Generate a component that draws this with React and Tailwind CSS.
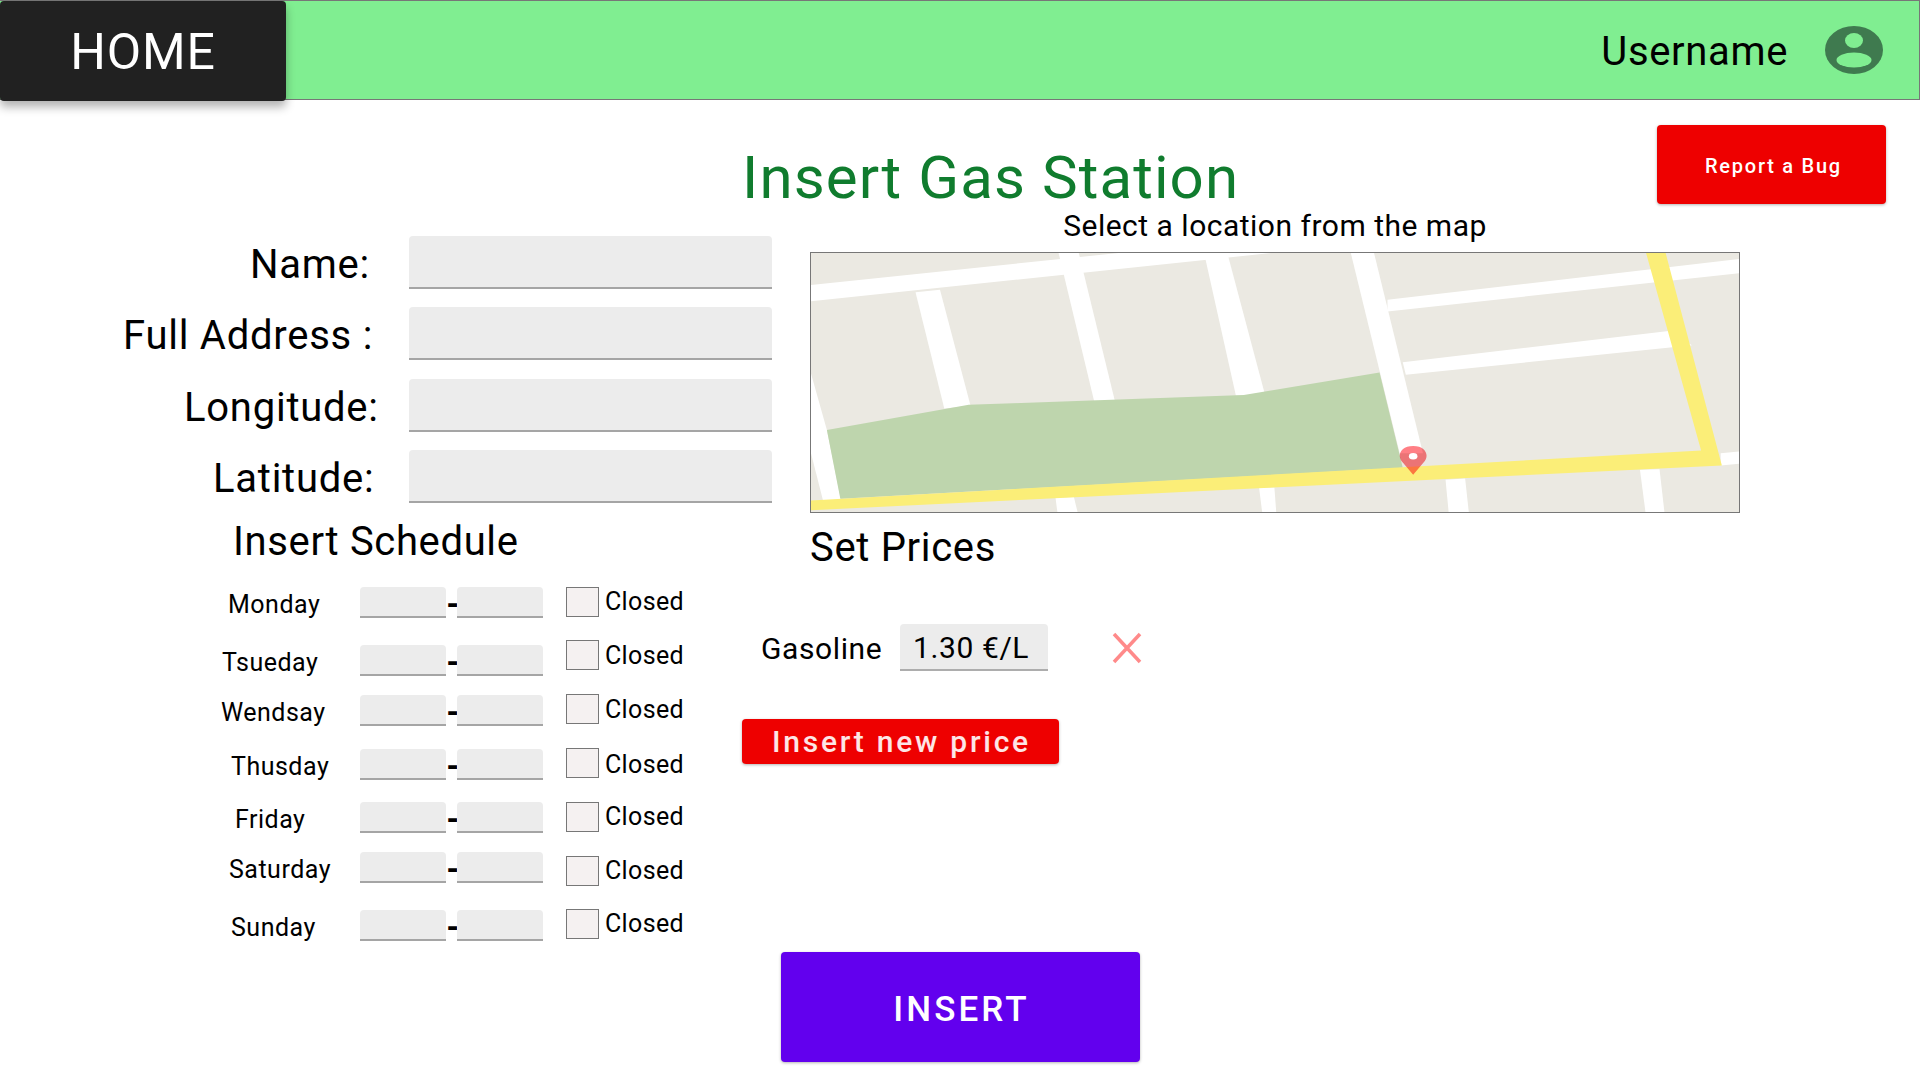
const fields = [
  { label: "Name:", cls: "pl-[250px]" },
  { label: "Full Address :", cls: "pl-[123px]" },
  { label: "Longitude:", cls: "pl-[184px]" },
  { label: "Latitude:", cls: "pl-[213px]" },
];

const days = [
  { d: "Monday", lc: "pl-[228px]", rc: "h-[58px]", cc: "mt-0", tc: "pt-0" },
  { d: "Tsueday", lc: "pl-[222px]", rc: "h-[50px]", cc: "-mt-[5px]", tc: "pt-[1px]" },
  { d: "Wendsay", lc: "pl-[221px]", rc: "h-[54px]", cc: "-mt-[1px]", tc: "pt-[1px]" },
  { d: "Thusday", lc: "pl-[231px]", rc: "h-[53px]", cc: "-mt-[3px]", tc: "pt-[4px]" },
  { d: "Friday", lc: "pl-[235px]", rc: "h-[50px]", cc: "mt-0", tc: "pt-0" },
  { d: "Saturday", lc: "pl-[229px]", rc: "h-[58px]", cc: "mt-[4px]", tc: "pt-0" },
  { d: "Sunday", lc: "pl-[231px]", rc: "h-[40px]", cc: "-mt-[1px]", tc: "pt-0" },
];

function Field({ className }) {
  return <div className={"bg-[#ececec] border-b-2 border-[#a5a5a5] rounded-t-[4px] " + className} />;
}

function MapView() {
  const white = [
    "17,133 425,55 520,37 770,37 17,182",
    "188,155 228,148 278,497 235,505",
    "422,37 455,37 514,482 480,482",
    "660,37 698,37 760,466 712,466",
    "900,37 938,37 1018,640 980,640",
    "960,178 1535,55 1535,98 960,213",
    "985,366 1420,272 1458,315 990,404",
    "17,400 43,570 66,780 37,785 17,640",
    "417,775 447,772 453,817 420,817",
    "750,745 775,743 778,817 755,817",
    "1055,720 1087,716 1093,817 1060,817",
    "1373,690 1405,688 1413,817 1382,817",
    "1505,640 1535,635 1535,672 1505,677",
  ];
  return (
    <div className="w-[930px] h-[261px] border border-[#777777] overflow-hidden bg-[#ebe9e2]">
      <svg viewBox="17 37 1518 780" preserveAspectRatio="none" className="block w-full h-full blur-[0.4px]">
        <rect x="17" y="37" width="1518" height="780" fill="#ebe9e2" />
        {white.map((p) => (
          <polygon key={p} points={p} fill="#ffffff" />
        ))}
        <polygon points="43,570 275,494 725,465 947,397 985,684 65,777" fill="#bed5ad" />
        <polygon points="17,782 1473,632 1383,37 1415,37 1507,677 17,812" fill="#fbee78" />
        <path
          d="M1002,705 L985,668 C975,650 980,618 1002,618 C1024,618 1029,650 1019,668 Z"
          fill="#ff7f85"
          className="mix-blend-multiply"
        />
        <ellipse cx="1002" cy="649" rx="7" ry="10" fill="#ffffff" />
      </svg>
    </div>
  );
}

export default function App() {
  return (
    <div className="w-[1920px] h-[1080px] overflow-hidden bg-white text-black font-[family-name:Roboto,sans-serif]">
      <header className="h-[100px] flex items-center justify-between bg-[#80ee91] border-y border-r border-[#777777]">
        <div className="w-[286px] h-[100px] -mb-px flex items-center justify-center bg-[#212121] rounded-[4px] text-white text-[50px] tracking-[0.8px] pt-[3px] shadow-[0_6px_10px_rgba(0,0,0,0.3)]">
          HOME
        </div>
        <div className="flex items-center">
          <span className="text-[40px] leading-[48px] tracking-[0.65px] pt-[3px]">Username</span>
          <svg width="58" height="48" viewBox="0 0 58 48" className="ml-[37px] mr-[36px]">
            <ellipse cx="29" cy="24" rx="29" ry="24" fill="#3f7a4f" />
            <ellipse cx="29" cy="14.5" rx="9" ry="7.5" fill="#80ee91" />
            <ellipse cx="29" cy="34" rx="17.5" ry="7.5" fill="#80ee91" />
          </svg>
        </div>
      </header>

      <div className="h-[110px] flex items-start">
        <h1 className="ml-[742px] mt-[43px] text-[60px] leading-[70px] text-[#107c2e] tracking-[1.1px] whitespace-nowrap">
          Insert Gas Station
        </h1>
        <button className="ml-auto mr-[34px] mt-[25px] w-[229px] h-[79px] pt-[3px] pl-[4px] rounded-[4px] bg-[#ee0000] text-white text-[20px] font-medium tracking-[1.75px] shadow-[0_1px_3px_rgba(0,0,0,0.3)]">
          Report a Bug
        </button>
      </div>

      <div className="flex">
        <div className="w-[810px] shrink-0 pt-[26px]">
          <div className="flex flex-col gap-[18.33px]">
            {fields.map((f) => (
              <div key={f.label} className="flex items-center h-[53px]">
                <label className={"w-[409px] text-[40px] leading-[48px] pt-[5px] tracking-[0.75px] whitespace-nowrap " + f.cls}>{f.label}</label>
                <Field className="w-[363px] h-[53px]" />
              </div>
            ))}
          </div>
          <h2 className="h-[84px] pl-[233px] pt-[15px] text-[40px] leading-[48px] tracking-[0.65px] whitespace-nowrap">Insert Schedule</h2>
          <div>
            {days.map((r) => (
              <div key={r.d} className={"flex items-start " + r.rc}>
                <div className="flex items-center h-[31px]">
                  <span className={"w-[360px] text-[25px] leading-[30px] pt-[6px] tracking-[0.5px] " + r.lc}>{r.d}</span>
                  <Field className="w-[86px] h-[31px]" />
                  <span className="w-[11px] text-center text-[30px] font-black leading-[30px] pt-[4px]">-</span>
                  <Field className="w-[86px] h-[31px]" />
                </div>
                <div className={"flex items-center ml-[23px] " + r.cc}>
                  <div className="w-[33px] h-[30px] bg-[#f5f1f1] border border-[#777777]" />
                  <span className={"ml-[6px] text-[25px] leading-[30px] tracking-[0.35px] " + r.tc}>Closed</span>
                </div>
              </div>
            ))}
          </div>
        </div>

        <div className="w-[930px] shrink-0">
          <p className="text-center text-[30px] leading-[32px] tracking-[0.5px] whitespace-nowrap">Select a location from the map</p>
          <div className="mt-[10px]">
            <MapView />
          </div>
          <h2 className="mt-[11px] -mb-[1px] text-[40px] leading-[48px] tracking-[0.67px]">Set Prices</h2>
          <div className="mt-[53px] -ml-[49px] flex items-center h-[47px]">
            <span className="w-[139px] pt-[2px] text-[30px] leading-[36px] tracking-[0.6px]">Gasoline</span>
            <div className="w-[148px] h-[47px] pl-[13px] pt-[2px] flex items-center bg-[#ececec] border-b-2 border-[#adadad] rounded-t-[4px] text-[30px] leading-[36px] whitespace-nowrap tracking-[0.6px]">
              1.30 €/L
            </div>
            <svg width="30" height="32" viewBox="0 0 30 32" className="ml-[64px]">
              <path d="M2 2 L28 30 M28 2 L2 30" stroke="#ff8a8a" strokeWidth="3.5" fill="none" />
            </svg>
          </div>
          <button className="mt-[48px] -ml-[68px] pl-[2px] block w-[317px] h-[45px] rounded-[4px] bg-[#ee0000] text-white/90 text-[30px] leading-[36px] font-medium tracking-[2.75px] shadow-[0_1px_3px_rgba(0,0,0,0.3)]">
            Insert new price
          </button>
        </div>
      </div>

      <div className="pl-[781px] pt-[2px]">
        <button className="w-[359px] h-[110px] pt-[6px] pl-[2px] rounded-[4px] bg-[#6200ee] text-white text-[35px] font-medium tracking-[3.1px] shadow-[0_1px_3px_rgba(0,0,0,0.3)]">
          INSERT
        </button>
      </div>
    </div>
  );
}
